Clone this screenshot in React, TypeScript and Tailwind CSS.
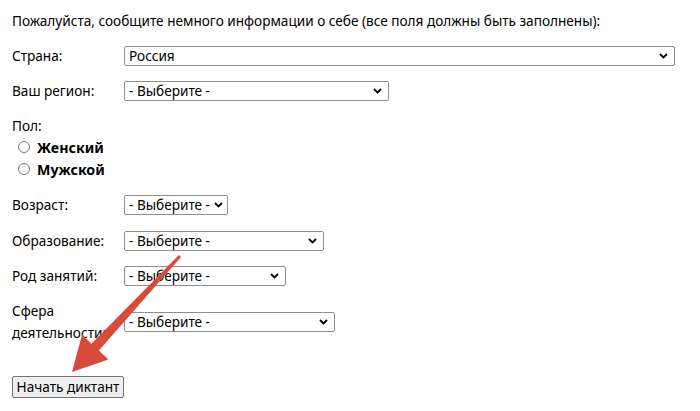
import React from 'react';

const Chevron = () => (
  <svg width="9" height="6" viewBox="0 0 9 6" className="shrink-0">
    <path d="M1 1l3.5 3.5L8 1" fill="none" stroke="#000" strokeWidth="1.8" />
  </svg>
);

const FakeSelect = ({ value, width }: { value: string; width: string }) => (
  <div className={`${width} h-[20px] flex items-center justify-between gap-1 pl-[4px] pr-[6px] border border-[#8f8f8f] rounded-[2px] bg-white leading-none whitespace-nowrap`}>
    <span>{value}</span>
    <Chevron />
  </div>
);

const Row = ({ label, children, className = '' }: { label: string; children: React.ReactNode; className?: string }) => (
  <div className={`flex items-center ${className}`}>
    <div className="w-[112px] shrink-0 leading-[22px]">{label}</div>
    {children}
  </div>
);

const Radio = ({ label }: { label: string }) => (
  <div className="flex items-center h-[22px] pl-[6px]">
    <span className="w-[12px] h-[12px] rounded-full border border-[#767676] bg-white" />
    <span className="ml-[7px] font-bold text-[14.2px] translate-y-[1px]">{label}</span>
  </div>
);

export default function App() {
  return (
    <div className="relative w-[700px] h-[411px] bg-white text-black px-3 font-['Noto_Sans',sans-serif] text-[13.6px] overflow-hidden">
      <p className="pt-[11px] leading-[20px]">
        Пожалуйста, сообщите немного информации о себе (все поля должны быть заполнены):
      </p>

      <Row label="Страна:" className="mt-[15px] h-[20px]">
        <FakeSelect value="Россия" width="w-[551px]" />
      </Row>
      <Row label="Ваш регион:" className="mt-[15px] h-[20px]">
        <FakeSelect value="- Выберите -" width="w-[265px]" />
      </Row>

      <div className="mt-[15px] leading-[19px]">Пол:</div>
      <div className="pt-[1px]">
        <Radio label="Женский" />
        <Radio label="Мужской" />
      </div>

      <Row label="Возраст:" className="mt-[15px] h-[20px]">
        <FakeSelect value="- Выберите -" width="w-[104px]" />
      </Row>
      <Row label="Образование:" className="mt-[16px] h-[20px]">
        <FakeSelect value="- Выберите -" width="w-[200px]" />
      </Row>
      <Row label="Род занятий:" className="mt-[15px] h-[20px]">
        <FakeSelect value="- Выберите -" width="w-[162px]" />
      </Row>
      <Row label="Сфера деятельности:" className="mt-[14px] h-[44px]">
        <FakeSelect value="- Выберите -" width="w-[211px]" />
      </Row>

      <button className="mt-[32px] h-[22px] w-[112px] border border-[#767676] rounded-[2px] bg-[#efefef] leading-none">
        Начать диктант
      </button>

      {/* annotation arrow drawn over the form */}
      <svg className="absolute inset-0 pointer-events-none" width="700" height="411">
        <polygon
          fill="#d84a3a"
          points="178.9,255 181.1,257 98.9,350.5 108.4,359.4 72,372 82,334.8 91.5,343.7"
        />
      </svg>
    </div>
  );
}
